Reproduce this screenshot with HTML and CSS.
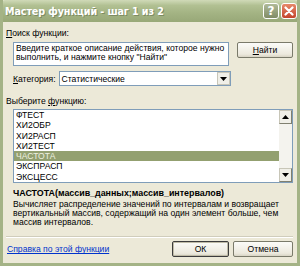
FILE: index.html
```html
<!DOCTYPE html>
<html lang="ru">
<head>
  <meta charset="UTF-8">
  <title>Мастер функций - шаг 1 из 2</title>
  <link rel="stylesheet" href="styles.css">
</head>
<body>
  <div class="window">
    <div class="titlebar">
      <span class="title">Мастер функций - шаг 1 из 2</span>
      <div class="title-btns">
        <div class="tbtn help">?</div>
        <div class="tbtn close">
          <svg width="10" height="10" viewBox="0 0 10 10"><path d="M1.5 1.5 L8.5 8.5 M8.5 1.5 L1.5 8.5" stroke="#fff" stroke-width="2.2" stroke-linecap="round"/></svg>
        </div>
      </div>
    </div>
    <div class="content">
      <div class="label top-label"><u>П</u>оиск функции:</div>
      <div class="search-row">
        <div class="search-box">Введите краткое описание действия, которое нужно выполнить, и нажмите кнопку "Найти"</div>
        <div class="button find"><u>Н</u>айти</div>
      </div>
      <div class="cat-row">
        <span class="label"><u>К</u>атегория:</span>
        <div class="combo">
          <span class="combo-text">Статистические</span>
          <div class="combo-arrow"><svg width="7" height="4" viewBox="0 0 7 4"><path d="M0 0 H7 L3.5 4 Z" fill="#000"/></svg></div>
        </div>
      </div>
      <div class="label list-label">Выберите <u>ф</u>ункцию:</div>
      <div class="listbox">
        <ul class="items">
          <li>ФТЕСТ</li>
          <li>ХИ2ОБР</li>
          <li>ХИ2РАСП</li>
          <li>ХИ2ТЕСТ</li>
          <li class="selected">ЧАСТОТА</li>
          <li>ЭКСПРАСП</li>
          <li>ЭКСЦЕСС</li>
        </ul>
        <div class="scrollbar">
          <div class="sbtn"><svg width="7" height="4" viewBox="0 0 7 4"><path d="M0 4 H7 L3.5 0 Z" fill="#000"/></svg></div>
          <div class="track"></div>
          <div class="sbtn"><svg width="7" height="4" viewBox="0 0 7 4"><path d="M0 0 H7 L3.5 4 Z" fill="#000"/></svg></div>
        </div>
      </div>
      <div class="signature">ЧАСТОТА(массив_данных;массив_интервалов)</div>
      <div class="description">Вычисляет распределение значений по интервалам и возвращает вертикальный массив, содержащий на один элемент больше, чем массив интервалов.</div>
      <div class="separator"></div>
      <div class="footer">
        <a class="help-link" href="#">Справка по этой функции</a>
        <div class="button ok">ОК</div>
        <div class="button cancel">Отмена</div>
      </div>
    </div>
  </div>
</body>
</html>
```

FILE: styles.css
```css
html, body {
  margin: 0;
  padding: 0;
  background: #ece9d8;
}
.window {
  width: 300px;
  height: 266px;
  box-sizing: border-box;
  background: #ece9d8;
  border: 3px solid #a4b386;
  border-top: none;
  font-family: "Liberation Sans", Arial, sans-serif;
  font-size: 8.6px;
  color: #000;
  display: flex;
  flex-direction: column;
  overflow: hidden;
}
.titlebar {
  height: 22px;
  margin: 0 -3px;
  display: flex;
  align-items: center;
  justify-content: space-between;
  padding: 0 3px 0 5px;
  background: linear-gradient(#d0dab8 0%, #b1c092 25%, #a3b383 60%, #98a878 100%);
  border-radius: 5px 5px 0 0;
}
.title {
  color: #fff;
  font-family: "DejaVu Sans", sans-serif;
  font-weight: bold;
  font-size: 9.6px;
  letter-spacing: -0.1px;
  text-shadow: 1px 1px 0 #7d8b62;
}
.title-btns {
  display: flex;
  gap: 2px;
}
.tbtn {
  width: 16px;
  height: 16px;
  box-sizing: border-box;
  border: 1px solid #fff;
  border-radius: 3px;
  display: flex;
  align-items: center;
  justify-content: center;
}
.help {
  background: linear-gradient(#b0ba98, #808c66);
  color: #fff;
  font-family: "DejaVu Sans", sans-serif;
  font-weight: bold;
  font-size: 12px;
}
.close {
  background: linear-gradient(#e6886a, #c4452c);
}
.content {
  flex: 1;
  padding: 0 4px 0 3px;
  display: flex;
  flex-direction: column;
}
.label {
  line-height: 10px;
}
.top-label {
  margin-top: 6px;
}
.search-row {
  display: flex;
  align-items: flex-start;
  margin-top: 4px;
  padding-left: 7px;
}
.search-box {
  width: 216px;
  height: 24px;
  box-sizing: border-box;
  background: #fff;
  border: 1px solid #7f9db9;
  padding: 1px 2px;
  line-height: 9.4px;
}
.button {
  box-sizing: border-box;
  height: 16px;
  display: flex;
  align-items: center;
  justify-content: center;
  background: linear-gradient(#fbfbf8, #ece9dd 80%, #d8d4c4);
  border: 1px solid #7a7a6a;
  border-radius: 2px;
}
.find {
  width: 56px;
  margin-left: 8px;
}
.cat-row {
  display: flex;
  align-items: center;
  margin-top: 5px;
  padding-left: 7px;
}
.combo {
  width: 172px;
  height: 15px;
  box-sizing: border-box;
  margin-left: 3px;
  background: #fff;
  border: 1px solid #7f9db9;
  display: flex;
  align-items: center;
  justify-content: space-between;
}
.combo-text {
  padding-left: 2px;
}
.combo-arrow {
  width: 13px;
  height: 13px;
  box-sizing: border-box;
  background: #f0efe8;
  border: 1px solid #c8c6b8;
  display: flex;
  align-items: center;
  justify-content: center;
}
.list-label {
  margin-top: 10px;
}
.listbox {
  margin: 3px 0 0 7px;
  width: 280px;
  height: 74px;
  box-sizing: border-box;
  background: #fff;
  border: 1px solid #7f9db9;
  display: flex;
  overflow: hidden;
}
.items {
  flex: 1;
  list-style: none;
  margin: 0;
  padding: 0;
}
.items li {
  height: 10.3px;
  line-height: 10.3px;
  padding-left: 2px;
}
.items .selected {
  background: #93a070;
  color: #eef0e0;
}
.scrollbar {
  width: 13px;
  display: flex;
  flex-direction: column;
  background: #f4f3ee;
}
.sbtn {
  height: 14px;
  box-sizing: border-box;
  background: #f0efe8;
  border: 1px solid #c8c6b8;
  border-right-color: #808070;
  border-bottom-color: #808070;
  display: flex;
  align-items: center;
  justify-content: center;
}
.track {
  flex: 1;
}
.signature {
  margin: 5px 0 0 7px;
  font-weight: bold;
  font-size: 8.9px;
  line-height: 10px;
}
.description {
  margin: 2px 0 0 7px;
  line-height: 8.8px;
  width: 272px;
}
.separator {
  margin-top: 10px;
  height: 0;
  border-top: 1px solid #d0cdbc;
  border-bottom: 1px solid #fff;
}
.footer {
  display: flex;
  align-items: center;
  margin-top: 3px;
}
.help-link {
  color: #0033cc;
  text-decoration: underline;
  flex: 1;
  padding-left: 1px;
}
.ok {
  width: 57px;
  border: 1px solid #3c3c3c;
  box-shadow: inset 0 0 0 1px #c0bca8;
}
.cancel {
  width: 60px;
  margin-left: 4px;
}
```
